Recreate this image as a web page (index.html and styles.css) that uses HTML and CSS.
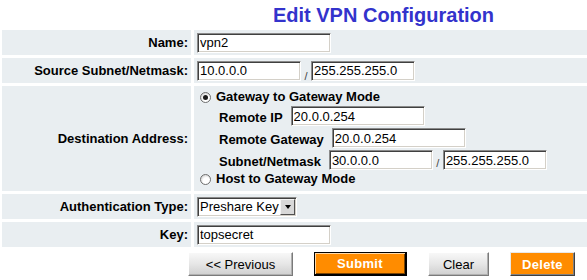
FILE: index.html
```html
<!DOCTYPE html>
<html>
<head>
<meta charset="utf-8">
<title>Edit VPN Configuration</title>
<link rel="stylesheet" href="styles.css">
</head>
<body>
<div class="page">
  <div class="title">Edit VPN Configuration</div>
  <div class="form">
    <div class="label">Name:</div>
    <div class="field"><input class="txt wide" type="text" value="vpn2"></div>

    <div class="label">Source Subnet/Netmask:</div>
    <div class="field"><input class="txt narrow" type="text" value="10.0.0.0"><span class="slash">/</span><input class="txt narrow" type="text" value="255.255.255.0"></div>

    <div class="label">Destination Address:</div>
    <div class="field dest">
      <label class="opt"><input class="radio" type="radio" name="mode" checked><span>Gateway to Gateway Mode</span></label>
      <div class="sub"><span class="sublabel">Remote IP</span><input class="txt wide" type="text" value="20.0.0.254"></div>
      <div class="sub"><span class="sublabel">Remote Gateway</span><input class="txt wide" type="text" value="20.0.0.254"></div>
      <div class="sub"><span class="sublabel">Subnet/Netmask</span><input class="txt narrow" type="text" value="30.0.0.0"><span class="slash">/</span><input class="txt narrow" type="text" value="255.255.255.0"></div>
      <label class="opt host"><input class="radio" type="radio" name="mode"><span>Host to Gateway Mode</span></label>
    </div>

    <div class="label">Authentication Type:</div>
    <div class="field">
      <span class="selectwrap">
        <select class="sel"><option>Preshare Key</option></select>
        <span class="selbtn"><span class="tri"></span></span>
      </span>
    </div>

    <div class="label">Key:</div>
    <div class="field"><input class="txt wide" type="text" value="topsecret"></div>
  </div>
  <div class="buttons">
    <button class="btn gray prev">&lt;&lt; Previous</button>
    <button class="btn orange submit">Submit</button>
    <button class="btn gray clear">Clear</button>
    <button class="btn orange delete">Delete</button>
  </div>
</div>
</body>
</html>
```
FILE: styles.css
```css
html, body {
  margin: 0;
  padding: 0;
  background: #ffffff;
}
body {
  font-family: "Liberation Sans", Arial, sans-serif;
  font-size: 13px;
  color: #000;
}
.page {
  width: 587px;
  overflow: hidden;
}
.title {
  padding: 3px 0 0 180px;
  text-align: center;
  font-weight: bold;
  font-size: 20px;
  line-height: 24px;
  color: #3333cc;
  margin-bottom: 3px;
}
.form {
  display: grid;
  grid-template-columns: 189px 1fr;
  column-gap: 3px;
  row-gap: 3px;
  margin-left: 2px;
}
.label {
  background: #e9eef1;
  font-weight: bold;
  display: flex;
  align-items: center;
  justify-content: flex-end;
  padding-right: 3px;
  min-height: 25px;
}
.field {
  background: #e9eef1;
  display: flex;
  align-items: center;
  padding: 0 3px;
  height: 25px;
  box-sizing: border-box;
}
.txt {
  font-family: "Liberation Sans", Arial, sans-serif;
  font-size: 13px;
  height: 20px;
  box-sizing: border-box;
  margin: 0;
  padding: 0 2px;
  border: 1px solid;
  border-color: #8a8a8a #ffffff #ffffff #8a8a8a;
  box-shadow: inset 1px 1px 0 #404040, inset -1px -1px 0 #d4d0c8;
  background: #fff;
  color: #000;
  outline: none;
}
.wide { width: 134px; }
.narrow { width: 104px; }
.slash {
  display: inline-block;
  width: 10px;
  text-align: center;
  font-size: 11px;
  color: #444;
  align-self: flex-end;
  padding-bottom: 1px;
}
.dest {
  height: 105px;
  flex-direction: column;
  align-items: flex-start;
  justify-content: flex-start;
  padding-top: 3px;
}
.opt {
  display: flex;
  align-items: center;
  height: 16px;
  line-height: 16px;
  font-weight: bold;
}
.radio {
  appearance: none;
  -webkit-appearance: none;
  width: 11px;
  height: 11px;
  margin: 0 5px 0 3px;
  border: 1px solid #6f6f6f;
  border-radius: 50%;
  box-sizing: border-box;
  background: radial-gradient(circle at 60% 65%, #ffffff 0 40%, #d8d8d8 75%);
  position: relative;
}
.radio:checked::after {
  content: "";
  position: absolute;
  left: 2px;
  top: 2px;
  width: 5px;
  height: 5px;
  border-radius: 50%;
  background: #1a1a1a;
}
.sub {
  display: flex;
  align-items: flex-end;
  height: 22px;
  padding: 1px 0 1px 22px;
  box-sizing: border-box;
}
.sublabel {
  font-weight: bold;
  line-height: 16px;
  margin-right: 8px;
}
.selectwrap {
  position: relative;
  display: inline-block;
  width: 100px;
  height: 20px;
}
.sel {
  appearance: none;
  -webkit-appearance: none;
  width: 100px;
  height: 20px;
  box-sizing: border-box;
  margin: 0;
  padding: 0 16px 0 2px;
  font-family: "Liberation Sans", Arial, sans-serif;
  font-size: 13px;
  color: #000;
  background: #fff;
  border: 1px solid;
  border-color: #8a8a8a #ffffff #ffffff #8a8a8a;
  box-shadow: inset 1px 1px 0 #404040, inset -1px -1px 0 #d4d0c8;
  outline: none;
}
.selbtn {
  position: absolute;
  right: 2px;
  top: 2px;
  width: 15px;
  height: 16px;
  box-sizing: border-box;
  background: #d8d8d8;
  border: 1px solid;
  border-color: #f4f4f4 #505050 #505050 #f4f4f4;
  display: flex;
  align-items: center;
  justify-content: center;
}
.tri {
  width: 0;
  height: 0;
  border-left: 3.5px solid transparent;
  border-right: 3.5px solid transparent;
  border-top: 4px solid #000;
}
.buttons {
  display: flex;
  gap: 21px;
  padding-left: 188px;
  margin-top: 5px;
}
.btn {
  font-family: "Liberation Sans", Arial, sans-serif;
  font-size: 13px;
  height: 24px;
  box-sizing: border-box;
  margin: 0;
  padding: 0;
  cursor: pointer;
}
.gray {
  color: #000;
  background: linear-gradient(#f8f8f8, #e6e6e6 50%, #cfcfcf);
  border: 1px solid;
  border-color: #ffffff #7a7a7a #7a7a7a #ffffff;
  box-shadow: inset -1px -1px 0 #b0b0b0;
}
.orange {
  color: #fff;
  font-weight: bold;
  background: #ff8c00;
  letter-spacing: 0.3px;
}
.prev { width: 105px; }
.submit {
  width: 93px;
  border: 2px solid #000;
  border-width: 1px 2px 2px 1px;
  box-shadow: inset 1px 1px 0 #ffd9a8, inset -1px -1px 0 #7a4300;
}
.clear { width: 61px; }
.delete {
  width: 65px;
  border: 1px solid;
  border-color: #e8e8e8 #404040 #404040 #e8e8e8;
  box-shadow: inset -1px -1px 0 #808080;
}
```
